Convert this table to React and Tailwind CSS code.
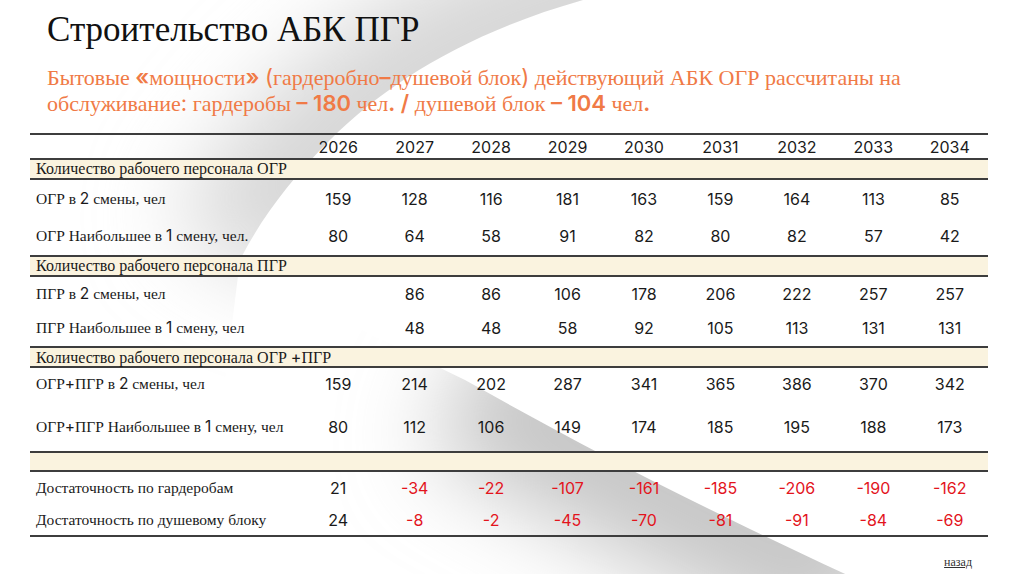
import React from "react";

const SERIF = "font-['Liberation_Serif',serif]";
const SANS = "font-['Inter',sans-serif]";

function S({ children, className = "" }) {
  return <span className={`${SANS} ${className}`}>{children}</span>;
}

const years = ["2026", "2027", "2028", "2029", "2030", "2031", "2032", "2033", "2034"];

function Line() {
  return <div className="h-[2px] bg-[#3d3d3d]" />;
}

function Section({ label, h = "h-[18px]" }) {
  return (
    <div className={`${h} bg-[#faf3df] flex items-center pl-[6px] text-[16px] text-[#1a1a1a] ${SERIF} whitespace-nowrap`}>
      <span>{label}</span>
    </div>
  );
}

function Row({ label, values, h, red = false, extra = "" }) {
  return (
    <div className={`grid grid-cols-[270px_repeat(9,minmax(0,1fr))] items-center ${h} ${extra}`}>
      <div className={`pl-[6px] text-[15.5px] text-[#1a1a1a] ${SERIF} whitespace-nowrap`}>{label}</div>
      {values.map((v, i) => (
        <div
          key={i}
          className={`text-center text-[16px] ${SANS} ${
            red && String(v).startsWith("-") ? "text-[#e3141c]" : "text-[#1a1a1a]"
          }`}
        >
          {v}
        </div>
      ))}
    </div>
  );
}

function Background() {
  return (
    <svg className="absolute inset-0" width="1024" height="574" viewBox="0 0 1024 574">
      <defs>
        <filter id="blurTop" x="-50%" y="-50%" width="200%" height="200%">
          <feGaussianBlur stdDeviation="45" />
        </filter>
        <filter id="blurBot" x="-50%" y="-50%" width="200%" height="200%">
          <feGaussianBlur stdDeviation="45" />
        </filter>
        <clipPath id="clipTop">
          <path d="M670 -20 C 505 10 400 70 330 140 C 290 180 260 220 240 260 L 220 420 L 0 420 L 0 -20 Z" />
        </clipPath>
        <clipPath id="clipBot">
          <path d="M300 300 L 465 380 C 590 450 705 510 880 590 L 880 600 L 0 600 L 0 300 Z" />
        </clipPath>
      </defs>
      <g clipPath="url(#clipTop)">
        <path
          d="M670 -20 C 505 10 400 70 330 140 C 290 180 260 220 240 260"
          stroke="#d6d6d6"
          strokeWidth="150"
          fill="none"
          filter="url(#blurTop)"
        />
      </g>
      <g clipPath="url(#clipBot)">
        <path
          d="M465 380 C 590 450 705 510 880 590"
          stroke="#c6c6c6"
          strokeWidth="160"
          fill="none"
          filter="url(#blurBot)"
        />
      </g>
    </svg>
  );
}

export default function App() {
  return (
    <div className="relative w-[1024px] h-[574px] overflow-hidden bg-white">
      <Background />
      <div className="relative">
        <h1 className={`pl-[47px] pt-[10px] h-[50px] leading-[40px] text-[35px] text-[#111] ${SERIF}`}>
          Строительство АБК ПГР
        </h1>
        <div className={`mt-[14px] pl-[47px] text-[22px] leading-[26px] text-[#f07a46] ${SERIF}`}>
          <div className="h-[26px] whitespace-nowrap">
            Бытовые <S className="font-semibold">«</S>мощности<S className="font-semibold">»</S>{" "}
            <S>(</S>гардеробно<S className="font-semibold">–</S>душевой блок<S>)</S> действующий АБК ОГР рассчитаны на
          </div>
          <div className="h-[26px] whitespace-nowrap">
            обслуживание<S>:</S> гардеробы <S className="font-semibold">– 180</S> чел<S className="font-semibold">.</S>{" "}
            <S className="font-semibold">/</S> душевой блок <S className="font-semibold">– 104</S> чел
            <S className="font-semibold">.</S>
          </div>
        </div>

        <div className="mt-[17px] ml-[30px] w-[958px]">
          <Line />
          <Row label="" values={years} h="h-[23px]" />
          <Line />
          <Section label="Количество рабочего персонала ОГР" />
          <Line />
          <Row
            label={<>ОГР в <S>2</S> смены, чел</>}
            values={[159, 128, 116, 181, 163, 159, 164, 113, 85]}
            h="h-[37px]"
          />
          <Row
            label={<>ОГР Наибольшее в <S>1</S> смену, чел.</>}
            values={[80, 64, 58, 91, 82, 80, 82, 57, 42]}
            h="h-[38px]"
          />
          <Line />
          <Section label="Количество рабочего персонала ПГР" />
          <Line />
          <Row
            label={<>ПГР в <S>2</S> смены, чел</>}
            values={["", 86, 86, 106, 178, 206, 222, 257, 257]}
            h="h-[33px]"
          />
          <Row
            label={<>ПГР Наибольшее в <S>1</S> смену, чел</>}
            values={["", 48, 48, 58, 92, 105, 113, 131, 131]}
            h="h-[36px]"
          />
          <Line />
          <Section label={<>Количество рабочего персонала ОГР <S>+</S>ПГР</>} />
          <Line />
          <Row
            label={<>ОГР<S>+</S>ПГР в <S>2</S> смены, чел</>}
            values={[159, 214, 202, 287, 341, 365, 386, 370, 342]}
            h="h-[31px]"
          />
          <Row
            label={<>ОГР<S>+</S>ПГР Наибольшее в <S>1</S> смену, чел</>}
            values={[80, 112, 106, 149, 174, 185, 195, 188, 173]}
            h="h-[52px]"
            extra="pt-[4px]"
          />
          <Line />
          <Section label="" h="h-[17px]" />
          <Line />
          <Row
            label="Достаточность по гардеробам"
            values={["21", "-34", "-22", "-107", "-161", "-185", "-206", "-190", "-162"]}
            h="h-[32px]"
            red
          />
          <Row
            label="Достаточность по душевому блоку"
            values={["24", "-8", "-2", "-45", "-70", "-81", "-91", "-84", "-69"]}
            h="h-[31px]"
            red
          />
          <Line />
        </div>

        <div className="mt-[18px] flex justify-end pr-[52px]">
          <span className={`text-[12px] leading-[14px] text-[#333] underline ${SERIF}`}>назад</span>
        </div>
      </div>
    </div>
  );
}
